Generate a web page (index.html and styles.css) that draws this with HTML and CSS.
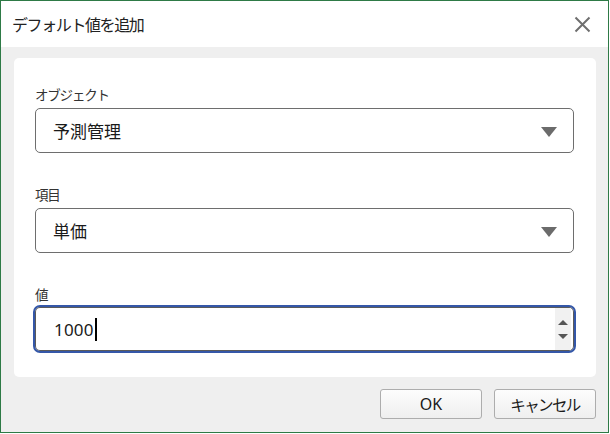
FILE: index.html
```html
<!DOCTYPE html>
<html lang="ja">
<head>
<meta charset="utf-8">
<title>デフォルト値を追加</title>
<link rel="stylesheet" href="styles.css">
</head>
<body>
<div class="window">
  <div class="titlebar">
    <span class="title">デフォルト値を追加</span>
    <svg class="close" width="17" height="17" viewBox="0 0 17 17"><path d="M1.5 1.5 L15.5 15.5 M15.5 1.5 L1.5 15.5" stroke="#6f6f6f" stroke-width="2" fill="none"/></svg>
  </div>
  <div class="content">
    <div class="card">
      <div class="label">オブジェクト</div>
      <div class="select"><span class="value">予測管理</span><span class="caret-down"></span></div>
      <div class="label gap">項目</div>
      <div class="select"><span class="value">単価</span><span class="caret-down"></span></div>
      <div class="label gap">値</div>
      <div class="numfield">
        <span class="value num">1000</span><span class="cursor"></span>
        <div class="spinner"><span class="up"></span><span class="down"></span></div>
      </div>
    </div>
    <div class="footer">
      <button class="btn">OK</button>
      <button class="btn jp">キャンセル</button>
    </div>
  </div>
</div>
</body>
</html>
```
FILE: styles.css
```css
* { box-sizing: border-box; }
html, body { margin: 0; padding: 0; background: #ffffff; }
body { font-family: "Noto Sans CJK JP", "Noto Sans", sans-serif; color: #1a1a1a; }
.window {
  width: 609px; height: 433px;
  border: 1px solid #2e7a46;
  display: flex; flex-direction: column;
  background: #efefef;
}
.titlebar {
  height: 46px; background: #ffffff;
  display: flex; align-items: center; justify-content: space-between;
  padding: 0 17px 0 11px;
}
.title { font-size: 16px; letter-spacing: -1.4px; color: #222; }
.close { display: block; margin-top: 1px; }
.content { flex: 1; display: flex; flex-direction: column; padding: 11px 12px 0 13px; }
.card {
  height: 319px; background: #ffffff; border-radius: 5px;
  padding: 26px 22px 0 21px;
  display: flex; flex-direction: column;
}
.label { font-size: 13.5px; line-height: 20px; height: 20px; letter-spacing: -1.2px; color: #333; margin-bottom: 4px; }
.label.gap { margin-top: 31px; }
.select {
  height: 45px; border: 1px solid #6e6e6e; border-radius: 5px;
  display: flex; align-items: center; justify-content: space-between;
  padding: 0 16px 0 17px;
}
.value { font-size: 17px; color: #1a1a1a; }
.caret-down {
  width: 0; height: 0;
  border-left: 8px solid transparent; border-right: 8px solid transparent;
  border-top: 10px solid #6b6b6b; margin-top: 2px;
}
.numfield {
  height: 48px; margin: -3px -2px 0 -2px;
  border: 2px solid #3457a8; border-radius: 7px;
  box-shadow: inset 0 0 0 1px #5a5a5a;
  display: flex; align-items: center; padding: 0 3px 0 19px; position: relative;
}
.num { font-family: "Noto Sans", sans-serif; font-size: 17px; letter-spacing: 0.2px; }
.cursor { width: 2px; height: 23px; background: #000; margin-left: 1px; }
.spinner {
  margin-left: auto; width: 16px; height: 42px; background: #f1f1f1;
  display: flex; flex-direction: column; justify-content: center; align-items: center; gap: 9px;
}
.spinner .up { width: 0; height: 0; border-left: 5px solid transparent; border-right: 5px solid transparent; border-bottom: 5px solid #555; }
.spinner .down { width: 0; height: 0; border-left: 5px solid transparent; border-right: 5px solid transparent; border-top: 5px solid #555; }
.footer { flex: 1; display: flex; justify-content: flex-end; align-items: flex-start; gap: 12px; padding-top: 12px; }
.btn {
  width: 102px; height: 30px; border: 1px solid #adadad; border-radius: 3px;
  background: linear-gradient(#fdfdfd, #efefef);
  font-family: "Noto Sans", "Noto Sans CJK JP", sans-serif; font-size: 16px; color: #1a1a1a; padding: 0;
}
.btn.jp { font-family: "Noto Sans CJK JP", sans-serif; letter-spacing: -1.6px; font-size: 15.5px; }
```
